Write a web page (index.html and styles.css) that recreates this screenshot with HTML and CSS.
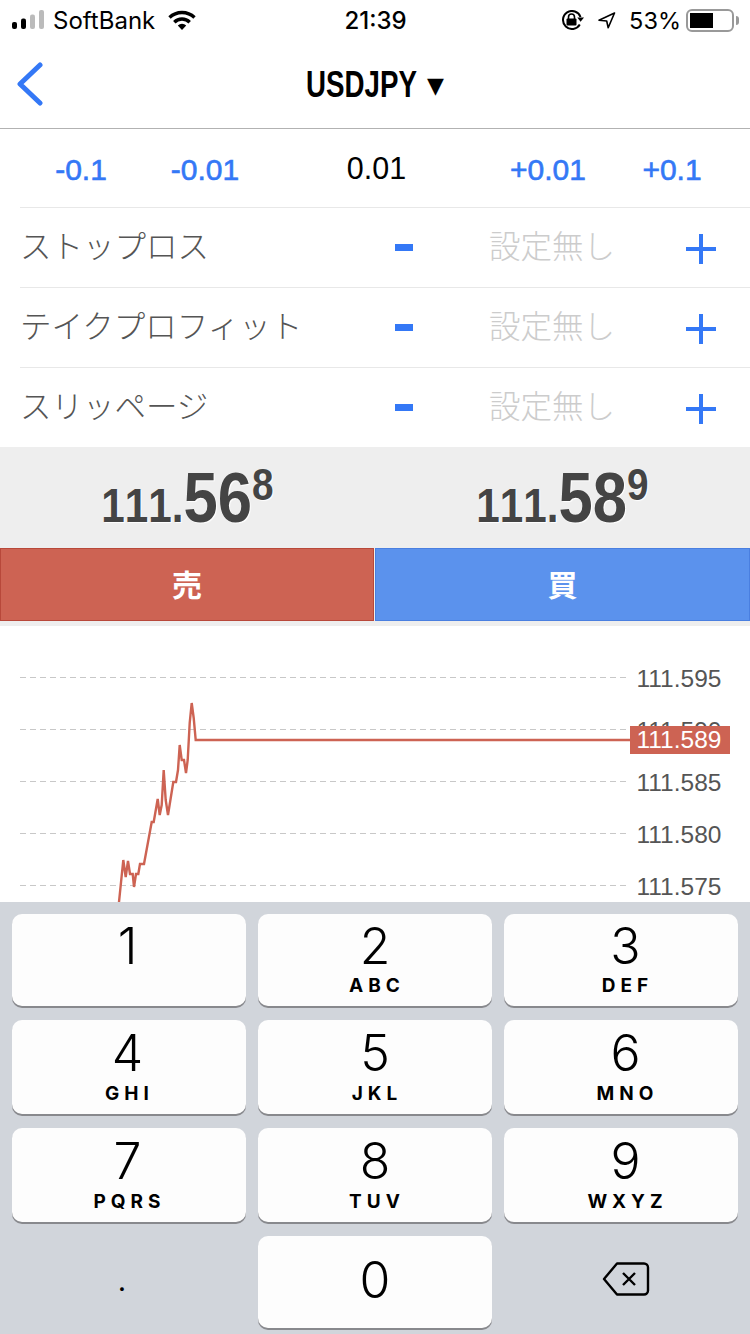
FILE: index.html
```html
<!DOCTYPE html>
<html lang="ja">
<head>
  <meta charset="UTF-8" />
  <meta name="viewport" content="width=device-width, initial-scale=1.0"/>
  <title>USDJPY</title>
  <link rel="stylesheet" href="styles.css">
</head>
<body>
  <div class="status-bar">
    <div class="status-left">
      <svg class="signal" width="32" height="20" viewBox="0 0 32 20">
        <rect x="0" y="12" width="5" height="7" rx="2" fill="#000"/>
        <rect x="9" y="8.500" width="5" height="10.500" rx="2" fill="#000"/>
        <rect x="18" y="4.500" width="5" height="14.500" rx="2" fill="#bbb"/>
        <rect x="27" y="0" width="5" height="19" rx="2" fill="#bbb"/>
      </svg>
      <span class="carrier">SoftBank</span>
      <svg class="wifi" width="28" height="20" viewBox="0 0 28 20">
        <path d="M1.500 7.500A18 18 0 0 1 26.500 7.500" fill="none" stroke="#000" stroke-width="3.400"/>
        <path d="M6.300 12.200A11 11 0 0 1 21.700 12.200" fill="none" stroke="#000" stroke-width="3.400"/>
        <path d="M14 20L9.800 15.500A6 6 0 0 1 18.200 15.500Z" fill="#000"/>
      </svg>
    </div>
    <div class="status-time">21:39</div>
    <div class="status-right">
      <svg class="rot-lock" width="23" height="20" viewBox="0 0 23 20">
        <path d="M19.500 7A9 9 0 1 0 18.800 14.500" fill="none" stroke="#000" stroke-width="2"/>
        <path d="M16.300 7.500L23 7.500L19.600 11.800Z" fill="#000"/>
        <rect x="5.500" y="8.500" width="10" height="7" rx="1" fill="#000"/>
        <path d="M7.500 9V7A3 3 0 0 1 13.500 7V9" fill="none" stroke="#000" stroke-width="1.600"/>
      </svg>
      <svg class="loc-arrow" width="18" height="17" viewBox="0 0 18 17">
        <path d="M16.500 1L1 8.200L8.700 9L10.200 15.800Z" fill="none" stroke="#000" stroke-width="1.600" stroke-linejoin="round"/>
      </svg>
      <span class="battery-pct">53%</span>
      <div class="battery"><div class="battery-level"></div></div>
      <div class="battery-nub"></div>
    </div>
  </div>

  <div class="nav-bar">
    <svg class="back" width="26" height="44" viewBox="0 0 26 44">
      <path d="M23 3L3 22L23 41" fill="none" stroke="#3478f6" stroke-width="5" stroke-linecap="round" stroke-linejoin="round"/>
    </svg>
    <div class="nav-title"><span class="nav-pair">USDJPY</span><span class="nav-caret">▼</span></div>
  </div>

  <div class="lot-row">
    <span class="lot-step">-0.1</span>
    <span class="lot-step">-0.01</span>
    <span class="lot-value">0.01</span>
    <span class="lot-step">+0.01</span>
    <span class="lot-step">+0.1</span>
  </div>

  <div class="order-row">
    <span class="order-label">ストップロス</span>
    <svg class="minus" width="18" height="7" viewBox="0 0 18 7"><rect width="18" height="7" fill="#3478f6"/></svg>
    <span class="order-value">設定無し</span>
    <svg class="plus" width="30" height="30" viewBox="0 0 30 30"><path d="M0 15H30M15 0V30" stroke="#3478f6" stroke-width="4"/></svg>
  </div>
  <div class="order-row">
    <span class="order-label">テイクプロフィット</span>
    <svg class="minus" width="18" height="7" viewBox="0 0 18 7"><rect width="18" height="7" fill="#3478f6"/></svg>
    <span class="order-value">設定無し</span>
    <svg class="plus" width="30" height="30" viewBox="0 0 30 30"><path d="M0 15H30M15 0V30" stroke="#3478f6" stroke-width="4"/></svg>
  </div>
  <div class="order-row">
    <span class="order-label">スリッページ</span>
    <svg class="minus" width="18" height="7" viewBox="0 0 18 7"><rect width="18" height="7" fill="#3478f6"/></svg>
    <span class="order-value">設定無し</span>
    <svg class="plus" width="30" height="30" viewBox="0 0 30 30"><path d="M0 15H30M15 0V30" stroke="#3478f6" stroke-width="4"/></svg>
  </div>

  <div class="price-panel">
    <div class="prices">
      <div class="price"><span class="price-small">111.</span><span class="price-big">56</span><span class="price-sup">8</span></div>
      <div class="price"><span class="price-small">111.</span><span class="price-big">58</span><span class="price-sup">9</span></div>
    </div>
    <div class="trade-buttons">
      <div class="trade-btn sell">売</div>
      <div class="trade-btn buy">買</div>
    </div>
  </div>

  <div class="chart">
    <svg class="chart-svg" width="750" height="276" viewBox="0 626 750 276">
      <path class="grid-line" d="M20 677.500H626M20 729.500H626M20 781.500H626M20 833.500H626M20 885.500H626"/>
      <text class="axis-label" x="636.500" y="687">111.595</text>
      <text class="axis-label" x="636.500" y="739">111.590</text>
      <text class="axis-label" x="636.500" y="791">111.585</text>
      <text class="axis-label" x="636.500" y="843">111.580</text>
      <text class="axis-label" x="636.500" y="895">111.575</text>
      <polyline class="price-line" points="119,902 123.300,860 125.700,877 128,861 130,874 132.700,874 134,887 136,874 138.300,874 140,864 144,864 151.700,822 153.700,822 157.700,799 159.700,815 161.700,805 163.700,770 165.700,800 168,815 173.300,782 176,782 178,770 179.700,745 181.700,760 184,760 186,773 187.700,760 189.700,723 191.700,703 193.700,718 195.700,740 630,740"/>
      <rect class="tag-bg" x="630" y="726" width="100" height="28"/>
      <text class="tag-label" x="636.500" y="748">111.589</text>
    </svg>
  </div>

  <div class="keyboard">
    <div class="key key-left"><span class="key-num">1</span></div>
    <div class="key"><span class="key-num">2</span><span class="key-letters">ABC</span></div>
    <div class="key key-right"><span class="key-num">3</span><span class="key-letters">DEF</span></div>
    <div class="key key-left key-tall"><span class="key-num">4</span><span class="key-letters">GHI</span></div>
    <div class="key key-tall"><span class="key-num">5</span><span class="key-letters">JKL</span></div>
    <div class="key key-right key-tall"><span class="key-num">6</span><span class="key-letters">MNO</span></div>
    <div class="key key-left key-tall"><span class="key-num">7</span><span class="key-letters">PQRS</span></div>
    <div class="key key-tall"><span class="key-num">8</span><span class="key-letters">TUV</span></div>
    <div class="key key-right key-tall"><span class="key-num">9</span><span class="key-letters">WXYZ</span></div>
    <div class="key-plain key-dot">.</div>
    <div class="key key-zero"><span class="key-num">0</span></div>
    <div class="key-plain key-delete">
      <svg width="48" height="36" viewBox="0 0 48 36">
        <path d="M15 2.500H42A4 4 0 0 1 46 6.500V29.500A4 4 0 0 1 42 33.500H15L2 18Z" fill="none" stroke="#000" stroke-width="2.400" stroke-linejoin="round"/>
        <path d="M21 12L33 24M33 12L21 24" fill="none" stroke="#000" stroke-width="2.400"/>
      </svg>
    </div>
  </div>
</body>
</html>
```

FILE: styles.css
```css
html, body {
  margin: 0;
  padding: 0;
  height: 1334px;
  overflow: hidden;
  background: #fff;
  color: #000;
  font-family: "Liberation Sans", Arial, "Noto Sans CJK JP", sans-serif;
}

/* status bar */
.status-bar {
  height: 40px;
  display: grid;
  grid-template-columns: 1fr auto 1fr;
  align-items: center;
  padding: 0 11px 0 12px;
  font-family: Inter, "Liberation Sans", sans-serif;
  font-size: 24px;
}
.status-left, .status-right {
  display: flex;
  align-items: center;
}
.status-right {
  justify-content: flex-end;
}
.carrier {
  margin-left: 9px;
}
.wifi {
  margin-left: 13px;
}
.status-time {
  font-weight: 500;
  font-size: 24px;
}
.loc-arrow {
  margin-left: 14px;
}
.battery-pct {
  margin-left: 13px;
  font-size: 23.500px;
}
.battery {
  box-sizing: border-box;
  width: 48px;
  height: 23px;
  margin-left: 5px;
  padding: 2px;
  border: 2px solid #999;
  border-radius: 6px;
}
.battery-level {
  width: 23px;
  height: 100%;
  background: #000;
}
.battery-nub {
  width: 3px;
  height: 9px;
  margin-left: 2px;
  background: #999;
  border-radius: 0 3px 3px 0;
}

/* nav */
.nav-bar {
  position: relative;
  box-sizing: border-box;
  height: 89px;
  padding-top: 2px;
  display: flex;
  align-items: center;
  justify-content: center;
  border-bottom: 1px solid #b2b2b2;
}
.back {
  position: absolute;
  left: 17px;
  top: 22px;
}
.nav-title {
  display: flex;
  align-items: center;
  font-weight: bold;
  font-size: 36px;
}
.nav-pair {
  display: inline-block;
  transform: scaleX(0.77);
  transform-origin: left center;
  margin-right: -33px;
}
.nav-caret {
  font-family: "DejaVu Sans", sans-serif;
  font-size: 22px;
  margin-left: 10px;
}

/* lot steppers */
.lot-row {
  height: 78px;
  display: grid;
  grid-template-columns: 124px 124px 1fr 124px 124px;
  align-items: center;
  justify-items: center;
  padding: 0 16px 0 19px;
  font-size: 30px;
}
.lot-step {
  color: #3478f6;
  -webkit-text-stroke: 0.6px #3478f6;
  margin-top: 3px;
}
.lot-value {
  font-size: 30.500px;
}

/* order rows */
.order-row {
  box-sizing: border-box;
  height: 80px;
  margin-left: 20px;
  padding: 0 18px 0 0;
  display: grid;
  grid-template-columns: 1fr 60px 236px 62px;
  align-items: center;
  justify-items: center;
  border-top: 1px solid #e8e8e8;
  font-family: "Noto Sans CJK JP", sans-serif;
  font-size: 31.500px;
}
.order-label {
  justify-self: start;
  color: #555;
  font-weight: 300;
  margin-bottom: 8px;
}
.order-value {
  color: #ccc;
  font-weight: 300;
  margin-bottom: 8px;
}
.plus {
  margin-top: 2px;
}

/* price panel */
.price-panel {
  background: #eee;
  height: 179px;
}
.prices {
  height: 101px;
  display: grid;
  grid-template-columns: 375px 375px;
}
.price {
  display: flex;
  justify-content: center;
  align-items: baseline;
  padding-top: 16px;
  font-weight: bold;
  font-kerning: none;
  color: #444;
  line-height: 70px;
  height: 70px;
  text-shadow: 1px 1px 1px #fff;
  transform: scaleX(0.88);
}
.price-small {
  font-size: 48px;
}
.price-big {
  font-size: 70px;
}
.price-sup {
  font-size: 44px;
  align-self: flex-start;
  line-height: 44px;
}
.trade-buttons {
  display: grid;
  grid-template-columns: 374px 375px;
  gap: 1px;
}
.trade-btn {
  box-sizing: border-box;
  height: 73px;
  padding-bottom: 4px;
  display: flex;
  align-items: center;
  justify-content: center;
  color: #fff;
  font-family: "Noto Sans CJK JP", sans-serif;
  font-weight: bold;
  font-size: 30px;
}
.sell {
  background: #cd6353;
  border: 1px solid #b8483a;
}
.buy {
  background: #5b92ed;
  border: 1px solid #4a7fe0;
}

/* chart */
.chart {
  height: 276px;
  overflow: hidden;
}
.chart-svg {
  display: block;
}
.grid-line {
  fill: none;
  stroke: #c8c8c8;
  stroke-width: 1;
  stroke-dasharray: 6 4;
}
.axis-label {
  font-size: 24.500px;
  fill: #555;
}
.price-line {
  fill: none;
  stroke: #cd6353;
  stroke-width: 2.400;
}
.tag-bg {
  fill: #cd6353;
}
.tag-label {
  font-size: 24.500px;
  fill: #fff;
}

/* keyboard */
.keyboard {
  height: 432px;
  box-sizing: border-box;
  padding: 12px;
  background: #d1d5db;
  display: grid;
  grid-template-columns: repeat(3, 234px);
  grid-template-rows: 92px 94px 94px 92px;
  column-gap: 12px;
  row-gap: 14px;
}
.key {
  box-sizing: border-box;
  display: flex;
  flex-direction: column;
  align-items: center;
  background: #fdfdfd;
  border-radius: 10px;
  box-shadow: 0 2px 0 #88898d;
}
.key-left {
  padding-right: 3px;
}
.key-right {
  padding-left: 9px;
}
.key-tall {
  padding-top: 1px;
}
.key-zero {
  padding-top: 12px;
}
.key-num {
  font-family: Inter, "Liberation Sans", sans-serif;
  font-weight: 300;
  font-size: 50px;
  line-height: 60px;
  margin-top: 2px;
}
.key-letters {
  font-family: Inter, "Liberation Sans", sans-serif;
  font-weight: 700;
  font-size: 19px;
  letter-spacing: 5px;
  margin-right: -4px;
  line-height: 22px;
  margin-top: -1px;
}
.key-tall .key-letters {
  margin-top: 0;
}
.key-plain {
  display: flex;
  align-items: center;
  justify-content: center;
}
.key-dot {
  font-family: Inter, "Liberation Sans", sans-serif;
  font-size: 26px;
  font-weight: 500;
  padding: 0 14px 0 0;
  margin-bottom: 2px;
}
.key-delete {
  padding-left: 10px;
  padding-bottom: 6px;
}
```
